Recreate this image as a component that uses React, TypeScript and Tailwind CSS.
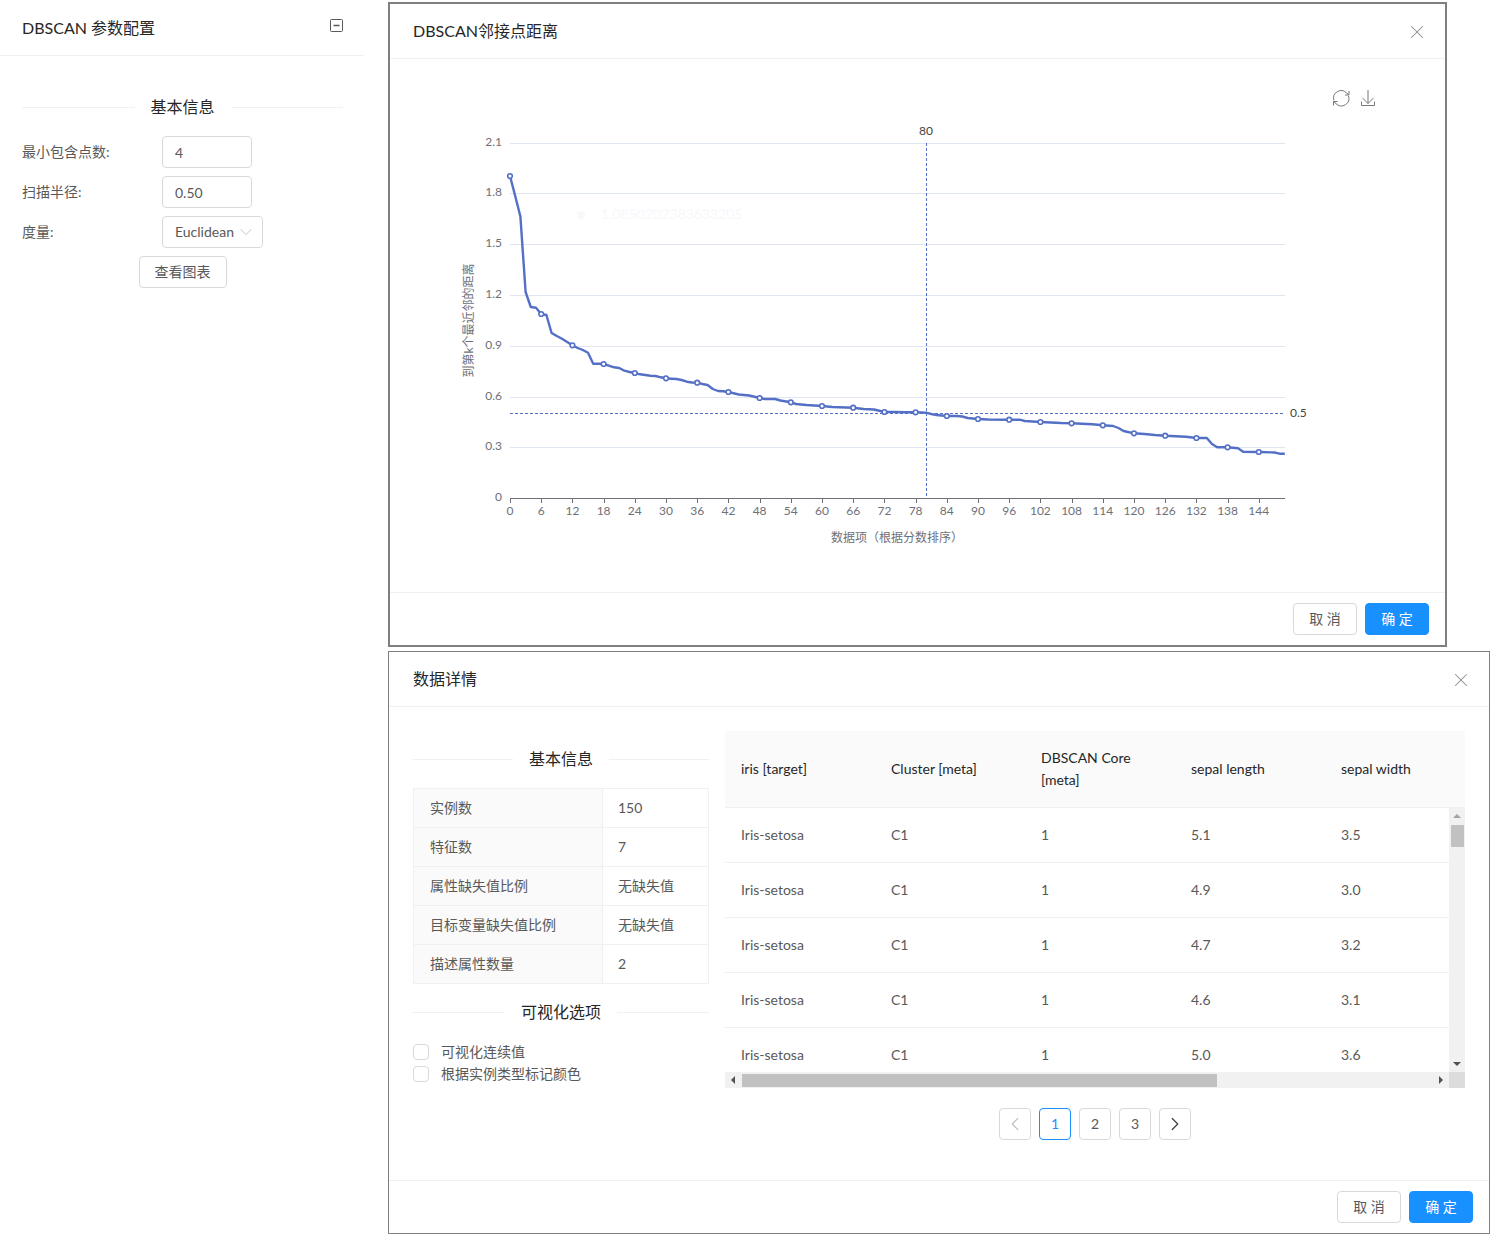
import React from 'react';
import { ChevronDown, ChevronLeft, ChevronRight, X } from 'lucide-react';

// [index, pixel y] samples of the k-distance curve
const curve: [number, number][] = [
  [0, 176], [1, 196], [2, 216.5], [3, 292], [4, 307], [5, 307.7], [6, 314], [7, 315], [8, 333], [9, 336],
  [10, 338.7], [11, 342], [12, 345.3], [13, 348], [14, 350], [15, 352.7], [16, 363.7], [17, 363.7], [18, 364],
  [19, 365.7], [20, 367.3], [21, 368], [22, 370.7], [23, 372], [24, 373], [25, 374.3], [26, 375], [27, 375.7],
  [28, 376], [29, 377.3], [30, 378.3], [31, 378.7], [32, 379], [33, 380], [34, 381.7], [35, 382.5], [36, 382.7],
  [37, 384], [38, 385], [39, 389], [40, 391], [41, 391.3], [42, 392], [44, 394.5], [46, 395.5], [48, 398],
  [49, 399], [51, 399], [52, 400.5], [54, 402.3], [55, 404], [57, 405], [60, 406], [62, 407], [66, 407.7],
  [68, 409], [70, 409.5], [72, 412], [74, 412], [76, 412.3], [78, 412.3], [80, 412.7], [81, 414], [82, 415],
  [84, 416], [86, 416], [87, 416.5], [88, 418], [90, 419], [92, 419.5], [96, 419.7], [98, 419.7], [99, 421],
  [102, 422], [105, 422.7], [106, 423], [108, 423.3], [112, 424.3], [114, 425.3], [116, 426], [117, 428],
  [118, 431], [120, 433.3], [122, 434], [124, 435], [126, 435.7], [130, 436.7], [132, 438], [134, 438],
  [135, 444], [136, 447.3], [138, 447.3], [140, 448.3], [141, 451.7], [144, 452], [147, 452.5], [148, 453.7],
  [149, 453.7],
];

const xAt = (i: number) => 510 + i * 5.2;

const yAt = (i: number) => {
  for (let n = 0; n < curve.length - 1; n++) {
    const [a, ya] = curve[n];
    const [b, yb] = curve[n + 1];
    if (i >= a && i <= b) return ya + ((yb - ya) * (i - a)) / (b - a);
  }
  return 453.7;
};

const yLabels = [
  ['2.1', 143.5], ['1.8', 193.5], ['1.5', 244.5], ['1.2', 295.5], ['0.9', 346.5], ['0.6', 397.5], ['0.3', 447.5],
] as const;

const xTicks = Array.from({ length: 25 }, (_, i) => i * 6);

function DistanceChart() {
  const line = curve.map(([i, y]) => `${xAt(i)},${y}`).join(' ');
  return (
    <svg viewBox="390 59 1055 533" className="block w-[1055px] h-[533px]" fontSize="12" fill="#6e7079">
      {/* toolbox */}
      <g fill="none" stroke="#777" strokeWidth="1">
        <path d="M1334 100.5a7.5 7.5 0 0 1 12.5-7.6l2 1.6" />
        <path d="M1349 91v4h-4" />
        <path d="M1348.5 96a7.5 7.5 0 0 1-12.5 7.6l-2-1.6" />
        <path d="M1333.5 105.5v-4h4" />
        <path d="M1368 90v13.5M1362.5 98l5.500 5.500 5.500-5.500M1361.500 101.500v4h13v-4" />
      </g>

      {/* faint leftover of the hover tooltip */}
      <circle cx="581" cy="215" r="4" fill="#f7f8fc" />
      <text x="601" y="219" fontSize="14" fill="#f7f8fc">1.0850202383633205</text>

      {/* grid */}
      {yLabels.map(([label, y]) => (
        <g key={label}>
          <line x1="510" x2="1285" y1={y} y2={y} stroke="#e0e6f1" />
          <text x="502" y={y + 2.5} textAnchor="end">{label}</text>
        </g>
      ))}
      <text x="502" y="501" textAnchor="end">0</text>

      {/* x axis */}
      <line x1="510" x2="1285" y1="498.5" y2="498.5" stroke="#6e7079" />
      {xTicks.map((t) => (
        <g key={t}>
          <line x1={Math.round(xAt(t)) + 0.5} x2={Math.round(xAt(t)) + 0.5} y1="498" y2="503" stroke="#6e7079" />
          <text x={xAt(t)} y="515" textAnchor="middle">{t}</text>
        </g>
      ))}
      <text x="897" y="542" textAnchor="middle">数据项（根据分数排序）</text>
      <text transform="translate(473 320.5) rotate(-90)" textAnchor="middle">到第k个最近邻的距离</text>

      {/* mark lines */}
      <line x1="510" x2="1285" y1="413.5" y2="413.5" stroke="#5470c6" strokeDasharray="3 2" />
      <line x1="926.5" x2="926.5" y1="143" y2="498" stroke="#5470c6" strokeDasharray="3 2" />
      <text x="926" y="135" textAnchor="middle" fill="#444">80</text>
      <text x="1290" y="417" fill="#444">0.5</text>

      {/* series */}
      <polyline points={line} fill="none" stroke="#5470c6" strokeWidth="2.4" strokeLinejoin="round" />
      {xTicks.map((t) => (
        <circle key={t} cx={xAt(t)} cy={yAt(t)} r="2.3" fill="#fff" stroke="#5470c6" strokeWidth="1.6" />
      ))}
    </svg>
  );
}

function SectionTitle({ title, className = '' }: { title: string; className?: string }) {
  return (
    <div className={`flex items-center gap-4 text-base text-[#262626] ${className}`}>
      <div className="h-px flex-1 bg-[#f0f0f0]" />
      <span className="leading-6">{title}</span>
      <div className="h-px flex-1 bg-[#f0f0f0]" />
    </div>
  );
}

function ModalFooter() {
  return (
    <div className="flex h-[53px] items-center justify-end gap-2 border-t border-[#f0f0f0] pr-4">
      <button className="h-8 w-16 rounded-sm border border-[#d9d9d9] bg-white text-sm text-[#595959]">取 消</button>
      <button className="h-8 w-16 rounded-sm border border-[#1890ff] bg-[#1890ff] text-sm text-white">确 定</button>
    </div>
  );
}

function ModalHeader({ title, className = '' }: { title: string; className?: string }) {
  return (
    <div className={`flex h-[55px] items-center justify-between border-b border-[#f0f0f0] pr-[17px] ${className}`}>
      <span className="text-base text-[#262626]">{title}</span>
      <X className="mt-[2px] h-[22px] w-[22px] text-[#8c8c8c]" strokeWidth={1.1} />
    </div>
  );
}

const basicInfo = [
  ['实例数', '150'],
  ['特征数', '7'],
  ['属性缺失值比例', '无缺失值'],
  ['目标变量缺失值比例', '无缺失值'],
  ['描述属性数量', '2'],
];

const rows = [
  ['5.1', '3.5'],
  ['4.9', '3.0'],
  ['4.7', '3.2'],
  ['4.6', '3.1'],
  ['5.0', '3.6'],
];

function DataTable() {
  return (
    <div className="w-[740px]">
      <div className="grid h-[77px] grid-cols-[150px_150px_150px_150px_140px] items-center border-b border-[#f0f0f0] bg-[#fafafa] text-sm leading-[22px] text-[#262626]">
        <div className="pl-4">iris [target]</div>
        <div className="pl-4">Cluster [meta]</div>
        <div className="px-4">DBSCAN Core [meta]</div>
        <div className="pl-4">sepal length</div>
        <div className="pl-4">sepal width</div>
      </div>
      <div className="flex h-[264px]">
        <div className="flex-1 overflow-hidden">
          {rows.map(([length, width], i) => (
            <div
              key={i}
              className="grid h-[55px] grid-cols-[150px_150px_150px_150px_124px] items-center border-b border-[#f0f0f0] text-sm text-[#595959]"
            >
              <div className="pl-4">Iris-setosa</div>
              <div className="pl-4">C1</div>
              <div className="pl-4">1</div>
              <div className="pl-4">{length}</div>
              <div className="pl-4">{width}</div>
            </div>
          ))}
        </div>
        {/* vertical scrollbar */}
        <div className="flex w-4 flex-col items-center bg-[#f1f1f1]">
          <svg viewBox="0 0 16 17" className="h-[17px] w-4 shrink-0" fill="#a3a3a3"><path d="M4 10 8 6l4 4z" /></svg>
          <div className="h-[22px] w-[13px] bg-[#c1c1c1]" />
          <div className="flex-1" />
          <svg viewBox="0 0 16 17" className="h-[17px] w-4 shrink-0" fill="#505050"><path d="M4 7 8 11l4-4z" /></svg>
        </div>
      </div>
      {/* horizontal scrollbar */}
      <div className="flex h-4 items-center bg-[#f1f1f1]">
        <svg viewBox="0 0 17 16" className="h-4 w-[17px] shrink-0" fill="#505050"><path d="M10 4 6 8l4 4z" /></svg>
        <div className="h-[13px] w-[475px] bg-[#c1c1c1]" />
        <div className="flex-1" />
        <svg viewBox="0 0 17 16" className="h-4 w-[17px] shrink-0" fill="#505050"><path d="M7 4l4 4-4 4z" /></svg>
        <div className="h-4 w-4 bg-[#dcdcdc]" />
      </div>
    </div>
  );
}

function Pager() {
  const box = 'flex h-8 w-8 items-center justify-center rounded-sm border text-sm';
  return (
    <div className="mt-5 flex justify-center gap-2">
      <div className={`${box} border-[#d9d9d9] text-[#bfbfbf]`}><ChevronLeft className="h-[22px] w-[22px]" strokeWidth={1.3} /></div>
      <div className={`${box} border-[#1890ff] text-[#1890ff]`}>1</div>
      <div className={`${box} border-[#d9d9d9] text-[#595959]`}>2</div>
      <div className={`${box} border-[#d9d9d9] text-[#595959]`}>3</div>
      <div className={`${box} border-[#d9d9d9] text-[#404040]`}><ChevronRight className="h-[22px] w-[22px]" strokeWidth={1.3} /></div>
    </div>
  );
}

export default function App() {
  return (
    <div className="flex h-[1237px] w-[1492px] bg-white [font-family:'Lato','Noto_Sans_CJK_SC',sans-serif]">
      {/* Parameter panel */}
      <div className="w-[388px] shrink-0">
        <div className="w-[364px]">
          <div className="flex h-[56px] items-center justify-between border-b border-[#f0f0f0] pl-[22px] pr-5">
            <span className="text-base text-[#262626]">DBSCAN 参数配置</span>
            <svg viewBox="0 0 14 14" className="mb-[3px] h-[14px] w-[14px]" fill="none" stroke="#595959">
              <rect x="0.5" y="0.5" width="12" height="12" rx="1" />
              <path d="M3.5 6.5h6" strokeWidth="1.5" />
            </svg>
          </div>
          <div className="pl-[22px] pr-[21px] pt-[39px]">
            <SectionTitle title="基本信息" />
            <div className="mt-[17px] flex flex-col gap-2 text-sm text-[#595959]">
              <div className="flex items-center">
                <span className="w-[140px]">最小包含点数:</span>
                <div className="flex h-8 w-[90px] items-center rounded-sm border border-[#d9d9d9] pl-3 pt-px">4</div>
              </div>
              <div className="flex items-center">
                <span className="w-[140px]">扫描半径:</span>
                <div className="flex h-8 w-[90px] items-center rounded-sm border border-[#d9d9d9] pl-3 pt-px">0.50</div>
              </div>
              <div className="flex items-center">
                <span className="w-[140px]">度量:</span>
                <div className="flex h-8 w-[101px] items-center justify-between rounded-sm border border-[#d9d9d9] pl-3 pr-[6px]">
                  Euclidean
                  <ChevronDown className="h-[20px] w-[20px] text-[#bfbfbf]" strokeWidth={1.1} />
                </div>
              </div>
              <div className="flex justify-center">
                <button className="h-8 w-[88px] rounded-sm border border-[#d9d9d9] text-sm text-[#595959]">查看图表</button>
              </div>
            </div>
          </div>
        </div>
      </div>

      <div className="flex flex-col gap-1 pt-[2px]">
        {/* Chart modal */}
        <div className="w-[1059px] border-2 border-[#7f7f7f] bg-white">
          <ModalHeader title="DBSCAN邻接点距离" className="pl-[23px]" />
          <DistanceChart />
          <ModalFooter />
        </div>

        {/* Data detail modal */}
        <div className="w-[1102px] border border-[#7f7f7f] bg-white">
          <ModalHeader title="数据详情" className="pl-6" />
          <div className="flex h-[473px] gap-4 pl-6 pt-6">
            <div className="w-[296px]">
              <SectionTitle title="基本信息" className="mt-4" />
              <div className="mt-[17px] border border-[#f0f0f0] text-sm text-[#595959]">
                {basicInfo.map(([label, value], i) => (
                  <div key={label} className={i > 0 ? 'flex h-[39px] border-t border-[#f0f0f0]' : 'flex h-[38px]'}>
                    <div className="flex w-[189px] items-center border-r border-[#f0f0f0] bg-[#fafafa] pl-4">{label}</div>
                    <div className="flex flex-1 items-center pl-[15px]">{value}</div>
                  </div>
                ))}
              </div>
              <SectionTitle title="可视化选项" className="mt-4" />
              <div className="mt-5 flex flex-col gap-[6px] text-sm text-[#595959]">
                {['可视化连续值', '根据实例类型标记颜色'].map((label) => (
                  <label key={label} className="flex h-4 items-center gap-3">
                    <span className="h-4 w-4 rounded-sm border border-[#d9d9d9]" />
                    {label}
                  </label>
                ))}
              </div>
            </div>
            <div>
              <DataTable />
              <Pager />
            </div>
          </div>
          <ModalFooter />
        </div>
      </div>
    </div>
  );
}
